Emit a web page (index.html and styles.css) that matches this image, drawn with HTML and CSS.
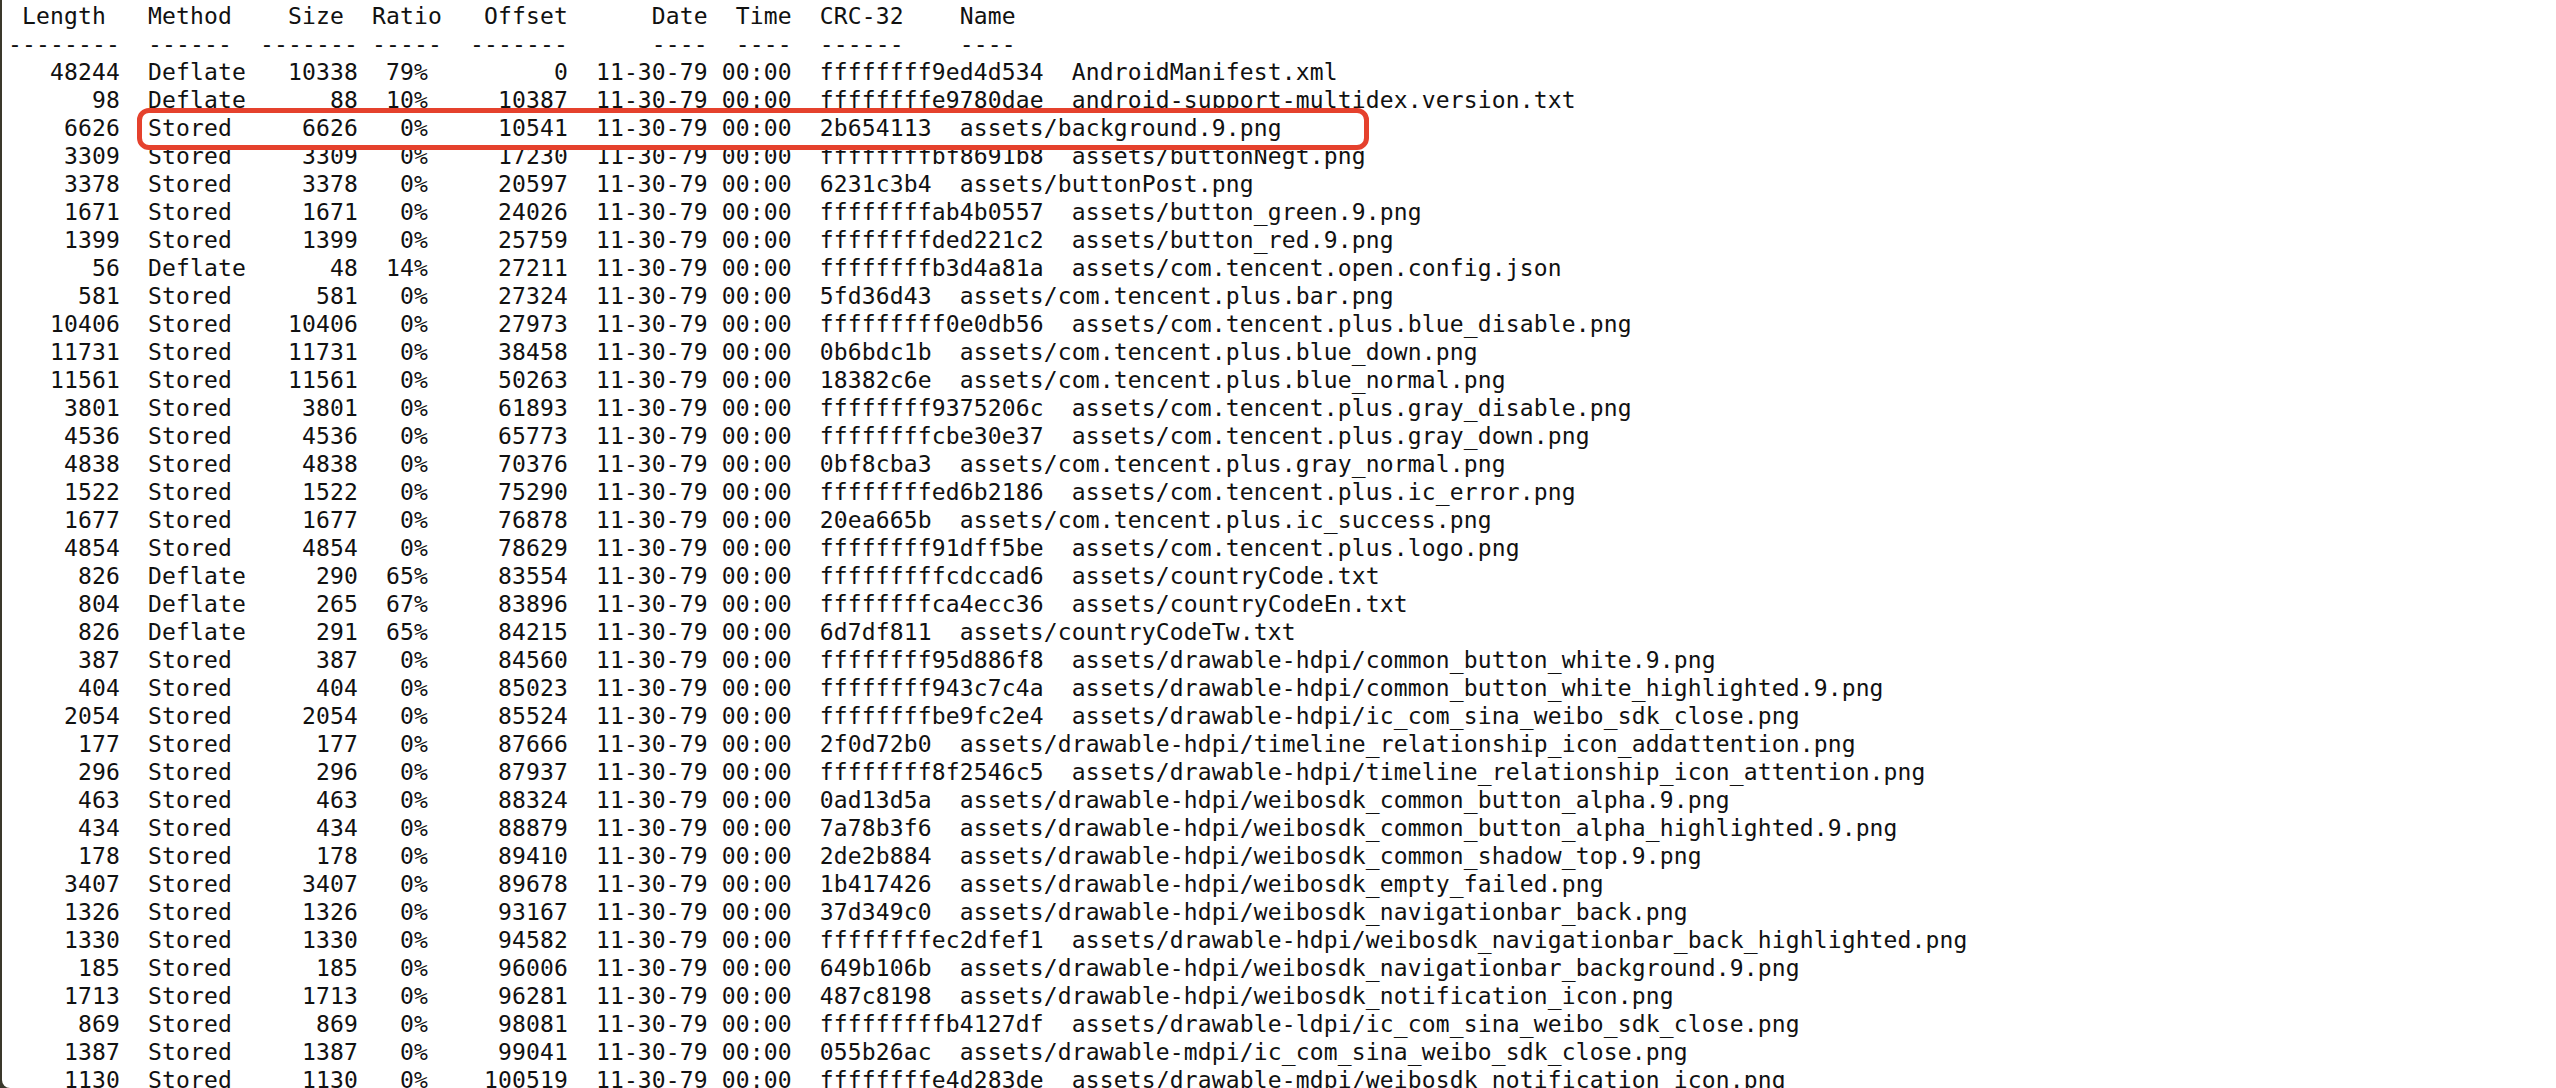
FILE: index.html
```html
<!DOCTYPE html>
<html lang="en">
<head>
<meta charset="UTF-8">
<title>aapt list -v</title>
<link rel="stylesheet" href="styles.css">
</head>
<body>
<div class="window">
<pre class="listing"> Length   Method    Size  Ratio   Offset      Date  Time  CRC-32    Name
--------  ------  ------- -----  -------      ----  ----  ------    ----
   48244  Deflate   10338  79%         0  11-30-79 00:00  ffffffff9ed4d534  AndroidManifest.xml
      98  Deflate      88  10%     10387  11-30-79 00:00  ffffffffe9780dae  android-support-multidex.version.txt
    6626  Stored     6626   0%     10541  11-30-79 00:00  2b654113  assets/background.9.png
    3309  Stored     3309   0%     17230  11-30-79 00:00  ffffffffbf8691b8  assets/buttonNegt.png
    3378  Stored     3378   0%     20597  11-30-79 00:00  6231c3b4  assets/buttonPost.png
    1671  Stored     1671   0%     24026  11-30-79 00:00  ffffffffab4b0557  assets/button_green.9.png
    1399  Stored     1399   0%     25759  11-30-79 00:00  ffffffffded221c2  assets/button_red.9.png
      56  Deflate      48  14%     27211  11-30-79 00:00  ffffffffb3d4a81a  assets/com.tencent.open.config.json
     581  Stored      581   0%     27324  11-30-79 00:00  5fd36d43  assets/com.tencent.plus.bar.png
   10406  Stored    10406   0%     27973  11-30-79 00:00  fffffffff0e0db56  assets/com.tencent.plus.blue_disable.png
   11731  Stored    11731   0%     38458  11-30-79 00:00  0b6bdc1b  assets/com.tencent.plus.blue_down.png
   11561  Stored    11561   0%     50263  11-30-79 00:00  18382c6e  assets/com.tencent.plus.blue_normal.png
    3801  Stored     3801   0%     61893  11-30-79 00:00  ffffffff9375206c  assets/com.tencent.plus.gray_disable.png
    4536  Stored     4536   0%     65773  11-30-79 00:00  ffffffffcbe30e37  assets/com.tencent.plus.gray_down.png
    4838  Stored     4838   0%     70376  11-30-79 00:00  0bf8cba3  assets/com.tencent.plus.gray_normal.png
    1522  Stored     1522   0%     75290  11-30-79 00:00  ffffffffed6b2186  assets/com.tencent.plus.ic_error.png
    1677  Stored     1677   0%     76878  11-30-79 00:00  20ea665b  assets/com.tencent.plus.ic_success.png
    4854  Stored     4854   0%     78629  11-30-79 00:00  ffffffff91dff5be  assets/com.tencent.plus.logo.png
     826  Deflate     290  65%     83554  11-30-79 00:00  fffffffffcdccad6  assets/countryCode.txt
     804  Deflate     265  67%     83896  11-30-79 00:00  ffffffffca4ecc36  assets/countryCodeEn.txt
     826  Deflate     291  65%     84215  11-30-79 00:00  6d7df811  assets/countryCodeTw.txt
     387  Stored      387   0%     84560  11-30-79 00:00  ffffffff95d886f8  assets/drawable-hdpi/common_button_white.9.png
     404  Stored      404   0%     85023  11-30-79 00:00  ffffffff943c7c4a  assets/drawable-hdpi/common_button_white_highlighted.9.png
    2054  Stored     2054   0%     85524  11-30-79 00:00  ffffffffbe9fc2e4  assets/drawable-hdpi/ic_com_sina_weibo_sdk_close.png
     177  Stored      177   0%     87666  11-30-79 00:00  2f0d72b0  assets/drawable-hdpi/timeline_relationship_icon_addattention.png
     296  Stored      296   0%     87937  11-30-79 00:00  ffffffff8f2546c5  assets/drawable-hdpi/timeline_relationship_icon_attention.png
     463  Stored      463   0%     88324  11-30-79 00:00  0ad13d5a  assets/drawable-hdpi/weibosdk_common_button_alpha.9.png
     434  Stored      434   0%     88879  11-30-79 00:00  7a78b3f6  assets/drawable-hdpi/weibosdk_common_button_alpha_highlighted.9.png
     178  Stored      178   0%     89410  11-30-79 00:00  2de2b884  assets/drawable-hdpi/weibosdk_common_shadow_top.9.png
    3407  Stored     3407   0%     89678  11-30-79 00:00  1b417426  assets/drawable-hdpi/weibosdk_empty_failed.png
    1326  Stored     1326   0%     93167  11-30-79 00:00  37d349c0  assets/drawable-hdpi/weibosdk_navigationbar_back.png
    1330  Stored     1330   0%     94582  11-30-79 00:00  ffffffffec2dfef1  assets/drawable-hdpi/weibosdk_navigationbar_back_highlighted.png
     185  Stored      185   0%     96006  11-30-79 00:00  649b106b  assets/drawable-hdpi/weibosdk_navigationbar_background.9.png
    1713  Stored     1713   0%     96281  11-30-79 00:00  487c8198  assets/drawable-hdpi/weibosdk_notification_icon.png
     869  Stored      869   0%     98081  11-30-79 00:00  fffffffffb4127df  assets/drawable-ldpi/ic_com_sina_weibo_sdk_close.png
    1387  Stored     1387   0%     99041  11-30-79 00:00  055b26ac  assets/drawable-mdpi/ic_com_sina_weibo_sdk_close.png
    1130  Stored     1130   0%    100519  11-30-79 00:00  ffffffffe4d283de  assets/drawable-mdpi/weibosdk_notification_icon.png</pre>
  <!-- red annotation drawn over the background.9.png row -->
  <div class="callout"></div>
</div>
</body>
</html>
```

FILE: styles.css
```css
  html, body {
    margin: 0;
    height: 100%;
    overflow: hidden;
  }
  body {
    background-color: #3a382b;
  }
  .window {
    position: relative;
    height: 1088px;
    margin-left: 2px;
    padding: 2px 0 0 6px;
    box-sizing: border-box;
    background-color: #fff;
    border-bottom-left-radius: 8px;
    overflow: hidden;
  }
  .listing {
    margin: 0;
    font-family: "DejaVu Sans Mono", "Liberation Mono", monospace;
    font-size: 23px;
    letter-spacing: 0.15px;
    line-height: 28px;
    color: #111;
  }
  .callout {
    position: absolute;
    left: 135px;
    top: 108px;
    width: 1232px;
    height: 42px;
    box-sizing: border-box;
    border: 5px solid #e5412d;
    border-radius: 12px;
  }
```
